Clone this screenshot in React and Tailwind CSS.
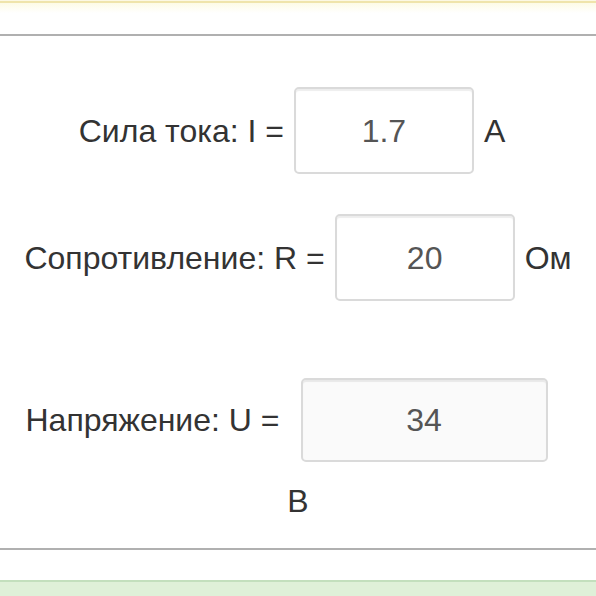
import React from "react";

const rows = [
  { label: "Сила тока: I =", value: "1.7", unit: "A", shift: "pr-[12px]" },
  { label: "Сопротивление: R =", value: "20", unit: "Ом", shift: "" },
];

function Field({ value, wide }) {
  return (
    <div
      className={`flex items-center justify-center rounded-[5px] border-2 border-[#dadada] shadow-[inset_0_2px_1px_rgba(0,0,0,0.07)] text-[#555] ${
        wide ? "w-[247px] h-[84px] bg-[#fafafa]" : "w-[180px] h-[87px] bg-white"
      }`}
    >
      {value}
    </div>
  );
}

export default function App() {
  return (
    <div className="w-[596px] h-[596px] overflow-hidden bg-white text-[32px] text-[#333] font-['Liberation_Sans',Arial,sans-serif]">
      {/* край жёлтого блока сверху */}
      <div className="h-[1px] bg-[#fcf8e3]" />
      <div className="h-[2px] bg-[#efe4ab]" />
      <div className="h-[10px] bg-gradient-to-b from-[#fdfbe6] to-white" />

      <div className="mt-[21px] h-[2px] bg-[#b0b0b0]" />

      <div className="h-[512px] flex flex-col">
        {rows.map((r, i) => (
          <div
            key={r.label}
            className={`flex items-center justify-center gap-[10px] ${r.shift} ${i === 0 ? "mt-[51px]" : "mt-[40px]"}`}
          >
            <span>{r.label}</span>
            <Field value={r.value} />
            <span>{r.unit}</span>
          </div>
        ))}

        <div className="mt-[77px] flex items-center justify-center gap-[21px] pr-[23px]">
          <span>Напряжение: U =</span>
          <Field value="34" wide />
        </div>
        <div className="mt-[21px] h-[36px] leading-[36px] text-center">В</div>
      </div>

      <div className="h-[2px] bg-[#b0b0b0]" />

      {/* край зелёного блока снизу */}
      <div className="mt-[30px] h-[2px] bg-[#c3dfbd]" />
      <div className="h-[20px] bg-[#dff0d8]" />
    </div>
  );
}
